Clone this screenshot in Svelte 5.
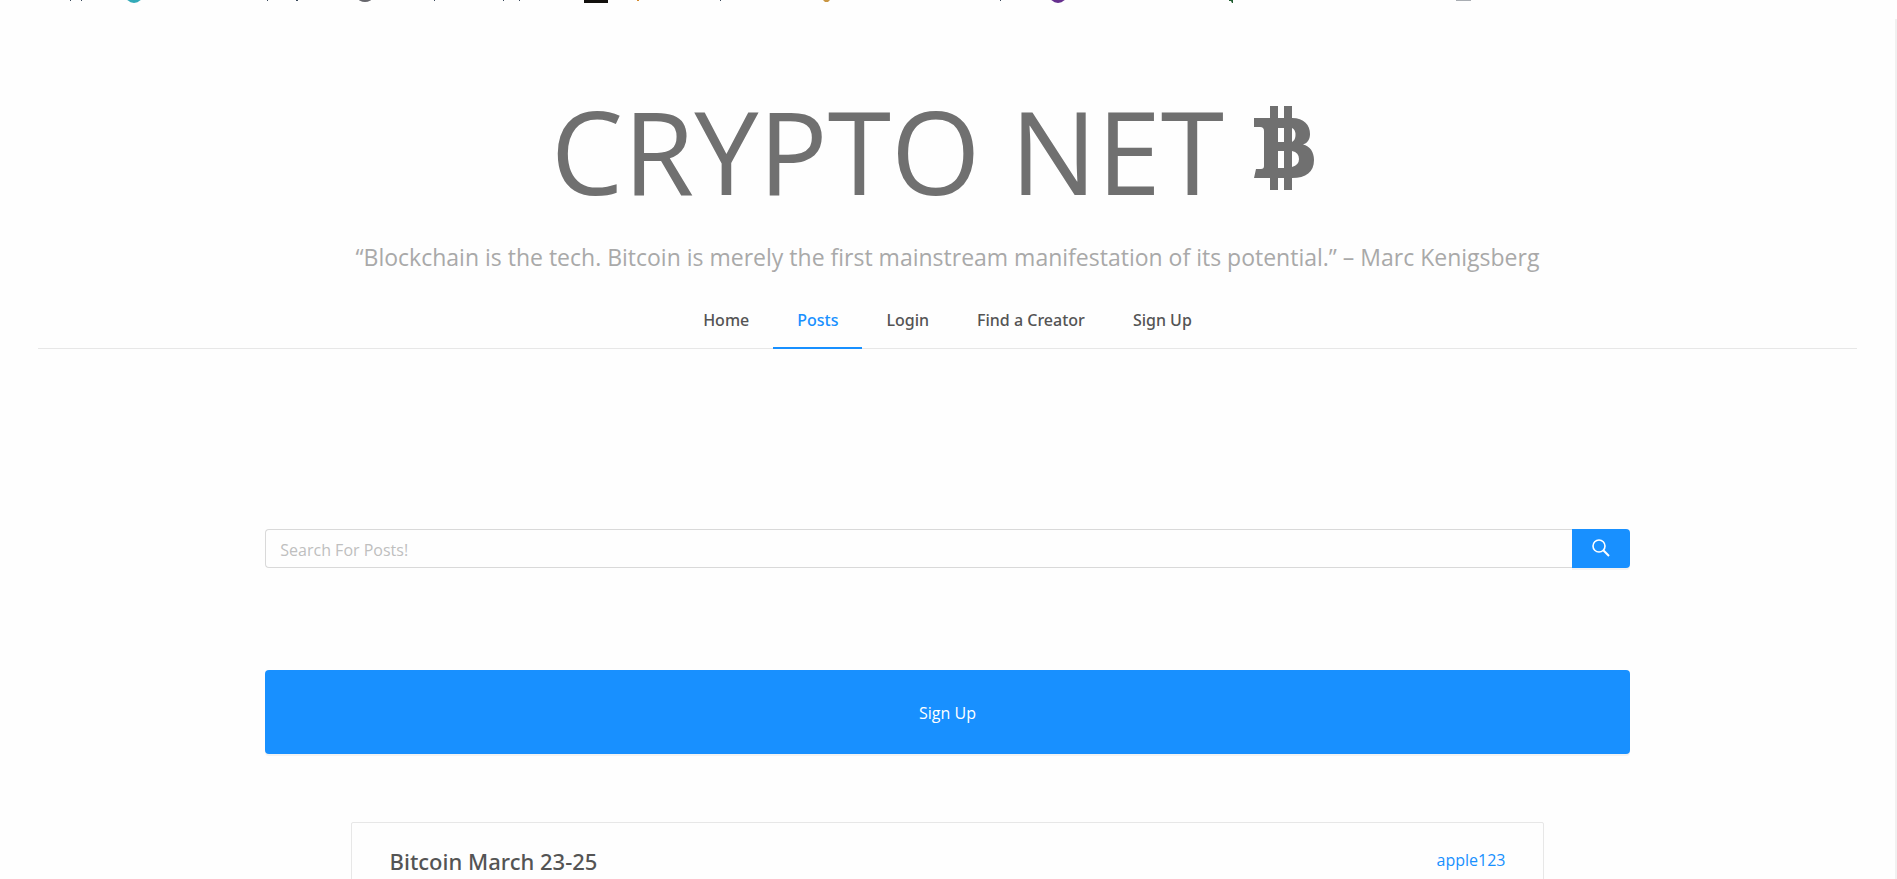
<script>
  const links = ['Home', 'Posts', 'Login', 'Find a Creator', 'Sign Up'];
  let active = $state('Posts');
  let query = $state('');
</script>

<div class="page">
  <svg class="strip" width="1480" height="3" viewBox="0 0 1480 3" aria-hidden="true">
    <g fill="#3b4a5c">
      <path d="M70 0h1v1h-1zM81 0h1v1h-1zM267 0h1v1h-1zM296 0h2v1h-2zM434 0h1v1h-1zM503 0h1v1h-1zM519 0h1v1h-1zM720 0h1v1h-1zM1000 0h1v1h-1z" />
    </g>
    <circle cx="134" cy="-6" r="9" fill="#33aab8" />
    <ellipse cx="365" cy="-2" rx="7" ry="4" fill="#66666c" />
    <path d="M584 0h24v3h-24z" fill="#12100d" />
    <path d="M637 0h2v1h-2z" fill="#d58a2c" />
    <path d="M823 0h7l-2 2h-3z" fill="#c99643" />
    <circle cx="1058" cy="-6" r="9" fill="#66308f" />
    <path d="M1229 0h4v3h-1l-1-2h-2z" fill="#205c30" />
    <path d="M1456 0h15v1h-15z" fill="#a9adb3" />
  </svg>

  <header>
    <h1>
      <span>CRYPTO NET</span>
      <svg class="coin" width="60" height="84" viewBox="0 0 60 84" aria-hidden="true">
        <path
          fill="currentColor"
          fill-rule="evenodd"
          d="M16 0H24V12H30V0H38V12C50 12 56 19 56 28C56 33 54 37 49 38.500C56 40 60 46 60 54C60 66 52 72 38 72V84H30V72H24V84H16V72H0L2 63H7Q10 63 10 60V25Q10 21 6 21H0V12H16ZM24 22V36H30V22ZM24 45V62H30V45ZM38 22V36Q41.500 34 41.500 29Q41.500 23.500 38 22ZM38 45V61Q45 59 45 53Q45 46.500 38 45Z"
        />
      </svg>
    </h1>
    <p class="quote">“Blockchain is the tech. Bitcoin is merely the first mainstream manifestation of its potential.” – Marc Kenigsberg</p>
    <nav>
      {#each links as link}
        <a href="#top" class:active={active === link} onclick={() => (active = link)}>{link}</a>
      {/each}
    </nav>
  </header>

  <main>
    <form class="search" onsubmit={(e) => e.preventDefault()}>
      <input type="text" aria-label="Search For Posts!" placeholder="Search For Posts!" bind:value={query} />
      <button type="submit" aria-label="Search">
        <svg width="18" height="18" viewBox="0 0 18 18" fill="none" stroke="currentColor" stroke-width="1.6" aria-hidden="true">
          <circle cx="7" cy="7" r="6" />
          <path d="M11.300 11.300L17 17" stroke-width="2" />
        </svg>
      </button>
    </form>

    <button class="signup" type="button">Sign Up</button>

    <article>
      <h2>Bitcoin March 23-25</h2>
      <a href="#apple123">apple123</a>
    </article>
  </main>
</div>

<style>
  :global(body) {
    background: #fefefe;
    overflow: hidden;
  }
  .page {
    box-sizing: border-box;
    height: 100vh;
    overflow: hidden;
    padding-right: 2px;
    background: linear-gradient(#f1f1f1, #f1f1f1) right 19px / 2px 100% no-repeat;
    font-family: 'Open Sans', 'Noto Sans', sans-serif;
    font-size: 16px;
    line-height: 24px;
    color: #545454;
  }
  .strip {
    display: block;
  }
  header {
    margin: 0 2%;
    padding-top: 68px;
    text-align: center;
  }
  h1 {
    display: flex;
    justify-content: center;
    gap: 30px;
    margin: 0;
    padding-right: 30px;
    font-size: 115px;
    font-weight: 400;
    line-height: 160px;
    color: #707070;
    white-space: nowrap;
  }
  .coin {
    margin-top: 35px;
  }
  .quote {
    margin: 6px 0 0;
    font-size: 23px;
    line-height: 40px;
    color: #a9a9a9;
  }
  nav {
    display: flex;
    justify-content: center;
    margin-top: 17px;
    border-bottom: 1px solid #e7e7e7;
  }
  nav a {
    margin-bottom: -1px;
    padding: 14px 24px 15px;
    border-bottom: 2px solid transparent;
    font-family: 'Noto Sans', sans-serif;
    font-weight: 500;
    color: #545454;
    text-decoration: none;
  }
  nav a.active {
    border-color: #1890ff;
    color: #1890ff;
  }
  main {
    margin: 180px 14% 0;
  }
  .search {
    display: flex;
    height: 39px;
  }
  input {
    flex: 1;
    min-width: 0;
    box-sizing: border-box;
    padding: 2px 14px 0;
    border: 1px solid #d9d9d9;
    border-right: 0;
    border-radius: 4px 0 0 4px;
    background: #fefefe;
    font: inherit;
    color: #545454;
    outline: none;
  }
  input::placeholder {
    color: #bfbfbf;
    opacity: 1;
  }
  button {
    border: 0;
    background: #1890ff;
    color: #fff;
    font: inherit;
    box-shadow: 0 2px 0 rgba(0, 0, 0, 0.045);
    cursor: pointer;
  }
  .search button {
    display: flex;
    align-items: center;
    justify-content: center;
    width: 58px;
    padding: 0 0 2px;
    border-radius: 0 4px 4px 0;
  }
  .signup {
    display: block;
    width: 100%;
    height: 84px;
    margin-top: 102px;
    padding: 2px 0 0;
    border-radius: 4px;
  }
  article {
    display: flex;
    justify-content: space-between;
    align-items: flex-start;
    box-sizing: border-box;
    height: 200px;
    margin: 68px 6.25% 0;
    padding: 23px 38px;
    border: 1px solid #e7e7e7;
    border-radius: 2px;
  }
  h2 {
    margin: 0;
    font-family: 'Noto Sans', sans-serif;
    font-size: 22px;
    font-weight: 500;
    line-height: 30px;
  }
  article a {
    line-height: 28px;
    color: #1890ff;
    text-decoration: none;
  }
</style>
